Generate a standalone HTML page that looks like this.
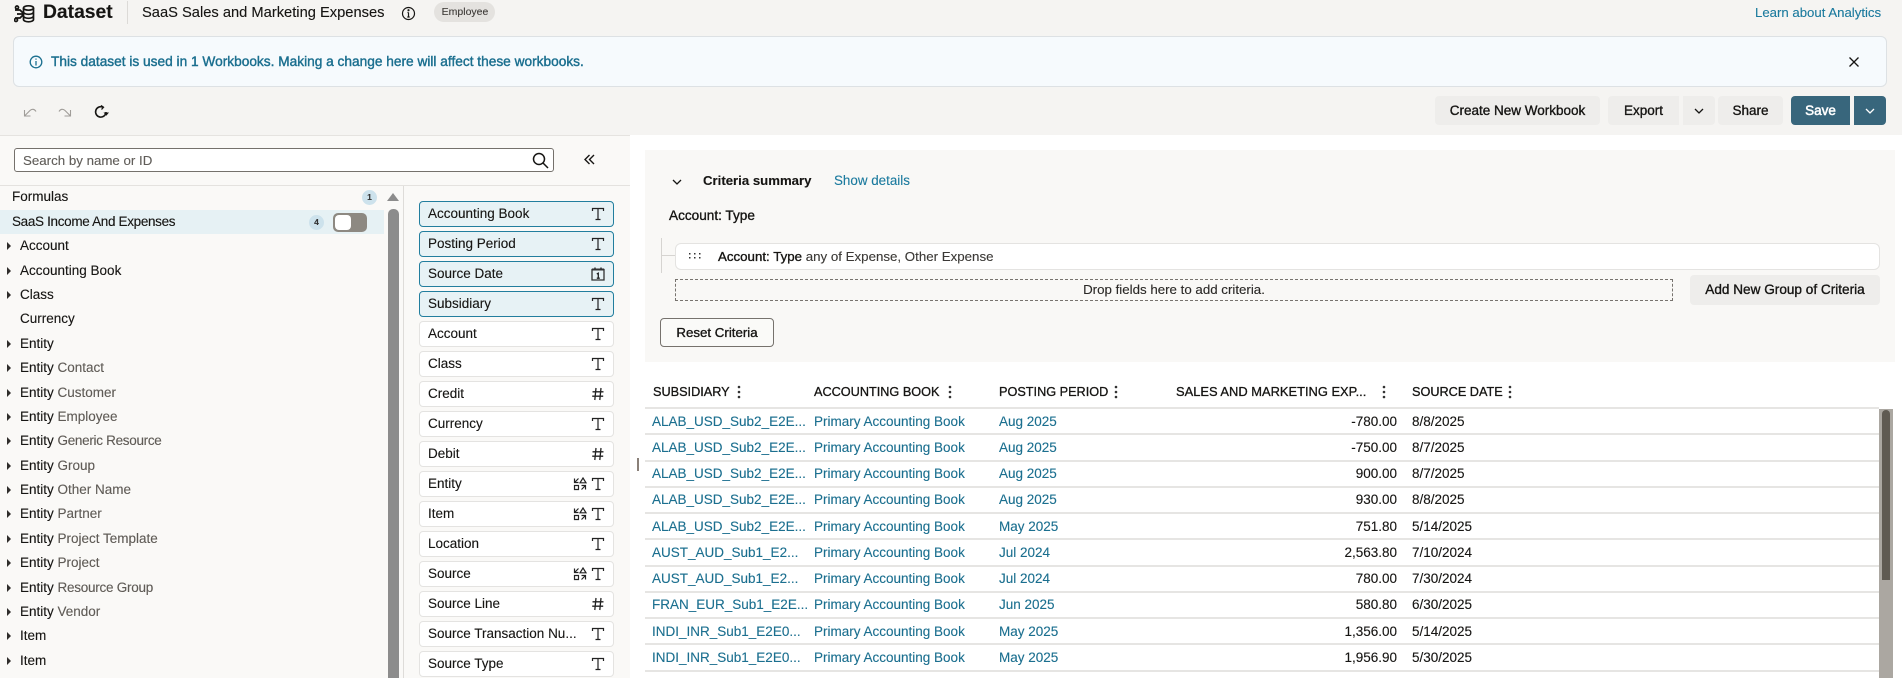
<!DOCTYPE html>
<html lang="en"><head><meta charset="utf-8"><title>Dataset</title>
<style>
html,body{margin:0;padding:0;width:1902px;height:678px;overflow:hidden;background:#fff;font-family:"Liberation Sans",sans-serif;color:#161513;font-size:13.5px;-webkit-text-stroke:.12px currentColor}
.a{position:absolute;white-space:nowrap;line-height:18px}
.box{position:absolute;box-sizing:border-box}
.btn{position:absolute;box-sizing:border-box;top:96px;height:29px;background:#eeedeb;border-radius:4px;text-align:center;line-height:29px;font-weight:400;-webkit-text-stroke:.35px #161513;font-size:13.5px}
.t{position:absolute;left:20px;white-space:nowrap;line-height:18px}
.t i{font-style:normal;color:#5f5b56}
.ar{position:absolute;left:7px;width:0;height:0;border-left:4px solid #2f2d2b;border-top:4px solid transparent;border-bottom:4px solid transparent}
.p{position:absolute;left:419px;width:195px;height:26px;box-sizing:border-box;background:#fff;border:1px solid #e4e3e1;border-radius:4px;line-height:24px;padding-left:8px;white-space:nowrap}
.p.s{background:#e7f2f5;border:1px solid #227e9e}
.p svg{position:absolute;top:4px}
.hl{position:absolute;left:645px;width:1234px;height:2px;background:#e6e5e3}
.h{position:absolute;top:383px;line-height:18px;white-space:nowrap;-webkit-text-stroke:.3px #161513;font-size:12.7px}
.c{position:absolute;line-height:18px;white-space:nowrap}
.l{color:#1b6f8f}
.n{text-align:right;width:120px;left:1277px}
.d{left:1412px}
svg{display:block}
</style></head><body>
<svg width="0" height="0" style="position:absolute"><defs>
<symbol id="T" viewBox="0 0 16 16"><path d="M2.5 5V2.5h11V5M8 2.5v11M5.5 13.5h5" fill="none" stroke="#222" stroke-width="1.2"/></symbol>
<symbol id="H" viewBox="0 0 16 16"><path d="M6 2 4.8 14M11 2 9.8 14M2.5 5.8h11M2.2 10.2h11" fill="none" stroke="#222" stroke-width="1.3"/></symbol>
<symbol id="C" viewBox="0 0 16 16"><path d="M2 3.500h12v10.500H2z" fill="none" stroke="#333" stroke-width="1.3"/><path d="M2 3.500h12" stroke="#333" stroke-width="2"/><path d="M5 1.500v2.500M11 1.500v2.500" stroke="#333" stroke-width="1.5"/><path d="M6.800 8 8.300 7.200v5M6.800 12.200h3" fill="none" stroke="#222" stroke-width="1.3"/></symbol>
<symbol id="G" viewBox="0 0 14 14"><path d="M1.5 1.500v4h4M1.5 5.500l4-4" fill="none" stroke="#222" stroke-width="1.2"/><path d="M10 1 13 5.800H7z" fill="none" stroke="#222" stroke-width="1.2"/><path d="M1.500 8.500h4v4h-4z" fill="none" stroke="#222" stroke-width="1.2"/><path d="M8.500 8.500h4v4M12.500 8.500l-4 4" fill="none" stroke="#222" stroke-width="1.2"/></symbol>
<symbol id="K" viewBox="0 0 6 16"><circle cx="3" cy="3" r="1.3" fill="#333"/><circle cx="3" cy="8" r="1.3" fill="#333"/><circle cx="3" cy="13" r="1.3" fill="#333"/></symbol>
</defs></svg>

<!-- top band -->
<div class="box" style="left:0;top:0;width:1902px;height:135px;background:#f5f4f2"></div>

<svg class="box" style="left:14px;top:4px" width="22" height="20" viewBox="0 0 22 20" fill="none" stroke="#161513" stroke-width="1.7"><ellipse cx="14.500" cy="4" rx="5" ry="2.200"/><path d="M9.500 4v11.500c0 1.300 2.200 2.300 5 2.300s5-1 5-2.300V4M9.500 8c0 1.300 2.200 2.300 5 2.300s5-1 5-2.300M9.500 12c0 1.300 2.200 2.300 5 2.300s5-1 5-2.300M1 6h5l3 3M1 14h5l3-3M3 10h6"/><circle cx="3" cy="3.500" r="1.500"/><circle cx="2" cy="16" r="1.500"/></svg>
<div class="a" style="left:43px;top:1px;font-size:19.300px;font-weight:700;line-height:24px">Dataset</div>
<div class="box" style="left:127px;top:1px;width:1px;height:23px;background:#dcdad7"></div>
<div class="a" style="left:142px;top:3px;font-size:14.700px;line-height:20px">SaaS Sales and Marketing Expenses</div>
<svg class="box" style="left:401px;top:6px" width="15" height="15" viewBox="0 0 15 15" fill="none" stroke="#161513" stroke-width="1.2"><circle cx="7.500" cy="7.500" r="6"/><path d="M7.500 6.500v4.500M6.300 11h2.400M6.500 6.500h1"/><circle cx="7.500" cy="4.200" r=".5"/></svg>
<div class="box" style="left:434px;top:2px;width:61px;height:20px;background:#e4e2df;border-radius:10px;text-align:center;line-height:20px;font-size:10.500px;color:#3f3c39;padding-left:1px">Employee</div>
<div class="a" style="left:1755px;top:3px;font-size:13.200px;color:#1b7a9e;line-height:20px">Learn about Analytics</div>

<!-- banner -->
<div class="box" style="left:13px;top:36px;width:1874px;height:51px;background:#f6fafd;border:1px solid #dde1e4;border-radius:6px"></div>
<svg class="box" style="left:29px;top:55px" width="14" height="14" viewBox="0 0 14 14" fill="none" stroke="#1b6f8f" stroke-width="1.3"><circle cx="7" cy="7" r="5.800"/><path d="M7 6v4.500"/><path d="M7 3.500v1.200"/></svg>
<div class="a" style="left:51px;top:53px;font-size:13.700px;color:#1b6f8f;-webkit-text-stroke:.4px #1b6f8f">This dataset is used in 1 Workbooks. Making a change here will affect these workbooks.</div>
<svg class="box" style="left:1848px;top:56px" width="12" height="12" viewBox="0 0 12 12" stroke="#161513" stroke-width="1.3"><path d="M1.500 1.500l9 9M10.500 1.500l-9 9"/></svg>

<!-- undo/redo/refresh -->
<svg class="box" style="left:23px;top:106px" width="14" height="12" viewBox="0 0 14 12" fill="none" stroke="#a09d99" stroke-width="1.1"><path d="M1.500 4v6h6M1.500 10 7 4.500c2-2 4.500-1.500 6 1"/></svg>
<svg class="box" style="left:58px;top:106px" width="14" height="12" viewBox="0 0 14 12" fill="none" stroke="#a09d99" stroke-width="1.1"><path d="M12.500 4v6h-6M12.500 10 7 4.500c-2-2-4.500-1.500-6 1"/></svg>
<svg class="box" style="left:94px;top:105px" width="15" height="14" viewBox="0 0 15 14" fill="none" stroke="#161513" stroke-width="1.6"><path d="M12 7A5.200 5.200 0 1 1 9 2.200"/><path d="M9.500 7.500h5.500l-2.700 3.300z" fill="#161513" stroke="none"/><path d="M7 .5 9.500 2.200 7.500 4.500" stroke-width="1.300"/></svg>

<!-- action buttons -->
<div class="btn" style="left:1435px;width:165px">Create New Workbook</div>
<div class="btn" style="left:1608px;width:71px;border-radius:4px 0 0 4px">Export</div>
<div class="btn" style="left:1683px;width:32px;border-radius:0 4px 4px 0"><svg class="box" style="left:11px;top:12px" width="10" height="6" viewBox="0 0 10 6" fill="none" stroke="#161513" stroke-width="1.3"><path d="M1 1l4 4 4-4"/></svg></div>
<div class="btn" style="left:1718px;width:65px">Share</div>
<div class="btn" style="left:1791px;width:59px;background:#38667c;color:#fff;-webkit-text-stroke:.5px #fff;border-radius:4px 0 0 4px">Save</div>
<div class="btn" style="left:1854px;width:32px;background:#38667c;border-radius:0 4px 4px 0"><svg class="box" style="left:11px;top:12px" width="10" height="6" viewBox="0 0 10 6" fill="none" stroke="#fff" stroke-width="1.3"><path d="M1 1l4 4 4-4"/></svg></div>

<!-- left panel -->
<div class="box" style="left:0;top:135px;width:630px;height:543px;background:#faf9f7;border-top:1px solid #e5e3e0"></div>
<div class="box" style="left:14px;top:148px;width:540px;height:24px;background:#fff;border:1px solid #75716c;border-radius:3px"></div>
<div class="a" style="left:23px;top:152px;color:#605d59;font-size:13.300px">Search by name or ID</div>
<svg class="box" style="left:532px;top:152px" width="17" height="17" viewBox="0 0 17 17" fill="none" stroke="#161513" stroke-width="1.5"><circle cx="7" cy="7" r="5.500"/><path d="M11 11l5 5"/></svg>
<svg class="box" style="left:584px;top:154px" width="11" height="11" viewBox="0 0 11 11" fill="none" stroke="#161513" stroke-width="1.4"><path d="M5.500 1 1 5.500 5.500 10M10 1 5.500 5.500 10 10"/></svg>
<div class="box" style="left:0;top:185px;width:630px;height:1px;background:#e4e2df"></div>
<div class="box" style="left:403px;top:186px;width:1px;height:492px;background:#dedcd9"></div>

<div class="a" style="left:12px;top:188px;">Formulas</div>
<div class="box" style="left:362px;top:190px;width:15px;height:15px;border-radius:50%;background:#cde2ec;text-align:center;line-height:15px;font-size:8.500px;font-weight:700;color:#333">1</div>
<div class="box" style="left:0;top:210px;width:384px;height:24px;background:#e6f1f4"></div>
<div class="a" style="left:12px;top:213px;letter-spacing:-.33px">SaaS Income And Expenses</div>
<div class="box" style="left:309px;top:215px;width:15px;height:15px;border-radius:50%;background:#cde2ec;text-align:center;line-height:15px;font-size:8.500px;font-weight:700;color:#333">4</div>
<div class="box" style="left:333px;top:213px;width:34px;height:19px;border-radius:5px;background:#8d8982"></div>
<div class="box" style="left:335px;top:215px;width:16px;height:15px;border-radius:4px;background:#fff"></div>

<div class="box" style="left:387px;top:193px;width:0;height:0;border-left:6.500px solid transparent;border-right:6.500px solid transparent;border-bottom:8px solid #8c8c8c"></div>
<div class="box" style="left:388px;top:209px;width:11px;height:469px;background:#8c8c8c;border-radius:5px 5px 0 0"></div>

<div class="ar" style="top:242px"></div><div class="t" style="top:237px">Account</div>
<div class="ar" style="top:267px"></div><div class="t" style="top:262px">Accounting Book</div>
<div class="ar" style="top:291px"></div><div class="t" style="top:286px">Class</div>
<div class="t" style="top:310px">Currency</div>
<div class="ar" style="top:340px"></div><div class="t" style="top:335px">Entity</div>
<div class="ar" style="top:364px"></div><div class="t" style="top:359px">Entity <i>Contact</i></div>
<div class="ar" style="top:389px"></div><div class="t" style="top:384px">Entity <i>Customer</i></div>
<div class="ar" style="top:413px"></div><div class="t" style="top:408px">Entity <i>Employee</i></div>
<div class="ar" style="top:437px"></div><div class="t" style="top:432px">Entity <i style="letter-spacing:-.3px">Generic Resource</i></div>
<div class="ar" style="top:462px"></div><div class="t" style="top:457px">Entity <i>Group</i></div>
<div class="ar" style="top:486px"></div><div class="t" style="top:481px">Entity <i>Other Name</i></div>
<div class="ar" style="top:510px"></div><div class="t" style="top:505px">Entity <i>Partner</i></div>
<div class="ar" style="top:535px"></div><div class="t" style="top:530px">Entity <i>Project Template</i></div>
<div class="ar" style="top:559px"></div><div class="t" style="top:554px">Entity <i>Project</i></div>
<div class="ar" style="top:584px"></div><div class="t" style="top:579px">Entity <i style="letter-spacing:-.25px">Resource Group</i></div>
<div class="ar" style="top:608px"></div><div class="t" style="top:603px">Entity <i>Vendor</i></div>
<div class="ar" style="top:632px"></div><div class="t" style="top:627px">Item</div>
<div class="ar" style="top:657px"></div><div class="t" style="top:652px">Item</div>

<!-- field pills -->
<div class="p s" style="top:201px">Accounting Book<svg style="left:170px" width="16" height="16"><use href="#T"/></svg></div>
<div class="p s" style="top:231px">Posting Period<svg style="left:170px" width="16" height="16"><use href="#T"/></svg></div>
<div class="p s" style="top:261px">Source Date<svg style="left:170px" width="16" height="16"><use href="#C"/></svg></div>
<div class="p s" style="top:291px">Subsidiary<svg style="left:170px" width="16" height="16"><use href="#T"/></svg></div>
<div class="p" style="top:321px">Account<svg style="left:170px" width="16" height="16"><use href="#T"/></svg></div>
<div class="p" style="top:351px">Class<svg style="left:170px" width="16" height="16"><use href="#T"/></svg></div>
<div class="p" style="top:381px">Credit<svg style="left:170px" width="16" height="16"><use href="#H"/></svg></div>
<div class="p" style="top:411px">Currency<svg style="left:170px" width="16" height="16"><use href="#T"/></svg></div>
<div class="p" style="top:441px">Debit<svg style="left:170px" width="16" height="16"><use href="#H"/></svg></div>
<div class="p" style="top:471px">Entity<svg style="left:153px;top:5px" width="14" height="14"><use href="#G"/></svg><svg style="left:170px" width="16" height="16"><use href="#T"/></svg></div>
<div class="p" style="top:501px">Item<svg style="left:153px;top:5px" width="14" height="14"><use href="#G"/></svg><svg style="left:170px" width="16" height="16"><use href="#T"/></svg></div>
<div class="p" style="top:531px">Location<svg style="left:170px" width="16" height="16"><use href="#T"/></svg></div>
<div class="p" style="top:561px">Source<svg style="left:153px;top:5px" width="14" height="14"><use href="#G"/></svg><svg style="left:170px" width="16" height="16"><use href="#T"/></svg></div>
<div class="p" style="top:591px">Source Line<svg style="left:170px" width="16" height="16"><use href="#H"/></svg></div>
<div class="p" style="top:621px">Source Transaction Nu...<svg style="left:170px" width="16" height="16"><use href="#T"/></svg></div>
<div class="p" style="top:651px">Source Type<svg style="left:170px" width="16" height="16"><use href="#T"/></svg></div>

<!-- criteria -->
<div class="box" style="left:645px;top:150px;width:1250px;height:212px;background:#f9f8f6"></div>
<svg class="box" style="left:672px;top:179px" width="10" height="6" viewBox="0 0 10 6" fill="none" stroke="#161513" stroke-width="1.3"><path d="M1 1l4 4 4-4"/></svg>
<div class="a" style="left:703px;top:172px;font-weight:700;font-size:13.200px">Criteria summary</div>
<div class="a" style="left:834px;top:172px;color:#1b7a9e;font-size:13.400px">Show details</div>
<div class="a" style="left:669px;top:207px;-webkit-text-stroke:.35px #161513;font-size:13.600px">Account: Type</div>
<div class="box" style="left:661px;top:238px;width:1px;height:35px;background:#d6d4d1"></div>
<div class="box" style="left:661px;top:255px;width:14px;height:1px;background:#d6d4d1"></div>
<div class="box" style="left:675px;top:243px;width:1205px;height:27px;background:#fff;border:1px solid #e4e3e1;border-radius:6px"></div>
<svg class="box" style="left:688px;top:253px" width="14" height="6" viewBox="0 0 14 6" fill="#333"><rect x="1" y="0" width="1.500" height="1.500"/><rect x="6" y="0" width="1.500" height="1.500"/><rect x="11" y="0" width="1.500" height="1.500"/><rect x="1" y="4" width="1.500" height="1.500"/><rect x="6" y="4" width="1.500" height="1.500"/><rect x="11" y="4" width="1.500" height="1.500"/></svg>
<div class="a" style="left:718px;top:248px;font-size:13.300px"><span style="-webkit-text-stroke:.35px #161513">Account: Type</span> <span style="color:#3b3936">any of Expense, Other Expense</span></div>
<div class="box" style="left:675px;top:279px;width:998px;height:22px;border:1px dashed #77736e;text-align:center;line-height:20px;font-size:13.300px;color:#2a2826">Drop fields here to add criteria.</div>
<div class="box" style="left:1690px;top:275px;width:190px;height:30px;background:#eeedeb;border-radius:4px;text-align:center;line-height:30px;-webkit-text-stroke:.35px #161513;font-size:13.600px">Add New Group of Criteria</div>
<div class="box" style="left:660px;top:318px;width:114px;height:29px;background:#fafaf8;border:1px solid #76726d;border-radius:4px;text-align:center;line-height:27px;-webkit-text-stroke:.35px #161513;font-size:13.300px">Reset Criteria</div>

<!-- table headers -->
<div class="h" style="left:653px">SUBSIDIARY</div><svg class="box" style="left:736px;top:384px" width="6" height="16"><use href="#K"/></svg>
<div class="h" style="left:814px">ACCOUNTING BOOK</div><svg class="box" style="left:947px;top:384px" width="6" height="16"><use href="#K"/></svg>
<div class="h" style="left:999px">POSTING PERIOD</div><svg class="box" style="left:1113px;top:384px" width="6" height="16"><use href="#K"/></svg>
<div class="h" style="left:1176px;font-size:12.9px">SALES AND MARKETING EXP...</div><svg class="box" style="left:1381px;top:384px" width="6" height="16"><use href="#K"/></svg>
<div class="h" style="left:1412px">SOURCE DATE</div><svg class="box" style="left:1507px;top:384px" width="6" height="16"><use href="#K"/></svg>

<div class="box" style="left:637px;top:458px;width:2px;height:13px;background:#8a8079"></div>

<div class="hl" style="top:407px"></div><div class="hl" style="top:433px"></div><div class="hl" style="top:460px"></div><div class="hl" style="top:486px"></div><div class="hl" style="top:512px"></div><div class="hl" style="top:538px"></div><div class="hl" style="top:565px"></div><div class="hl" style="top:591px"></div><div class="hl" style="top:617px"></div><div class="hl" style="top:643px"></div><div class="hl" style="top:670px"></div>

<!-- rows -->
<div class="c l" style="left:652px;top:413px">ALAB_USD_Sub2_E2E...</div><div class="c l" style="left:814px;top:413px">Primary Accounting Book</div><div class="c l" style="left:999px;top:413px">Aug 2025</div><div class="c n" style="top:413px">-780.00</div><div class="c d" style="top:413px">8/8/2025</div>
<div class="c l" style="left:652px;top:439px">ALAB_USD_Sub2_E2E...</div><div class="c l" style="left:814px;top:439px">Primary Accounting Book</div><div class="c l" style="left:999px;top:439px">Aug 2025</div><div class="c n" style="top:439px">-750.00</div><div class="c d" style="top:439px">8/7/2025</div>
<div class="c l" style="left:652px;top:465px">ALAB_USD_Sub2_E2E...</div><div class="c l" style="left:814px;top:465px">Primary Accounting Book</div><div class="c l" style="left:999px;top:465px">Aug 2025</div><div class="c n" style="top:465px">900.00</div><div class="c d" style="top:465px">8/7/2025</div>
<div class="c l" style="left:652px;top:491px">ALAB_USD_Sub2_E2E...</div><div class="c l" style="left:814px;top:491px">Primary Accounting Book</div><div class="c l" style="left:999px;top:491px">Aug 2025</div><div class="c n" style="top:491px">930.00</div><div class="c d" style="top:491px">8/8/2025</div>
<div class="c l" style="left:652px;top:518px">ALAB_USD_Sub2_E2E...</div><div class="c l" style="left:814px;top:518px">Primary Accounting Book</div><div class="c l" style="left:999px;top:518px">May 2025</div><div class="c n" style="top:518px">751.80</div><div class="c d" style="top:518px">5/14/2025</div>
<div class="c l" style="left:652px;top:544px">AUST_AUD_Sub1_E2...</div><div class="c l" style="left:814px;top:544px">Primary Accounting Book</div><div class="c l" style="left:999px;top:544px">Jul 2024</div><div class="c n" style="top:544px">2,563.80</div><div class="c d" style="top:544px">7/10/2024</div>
<div class="c l" style="left:652px;top:570px">AUST_AUD_Sub1_E2...</div><div class="c l" style="left:814px;top:570px">Primary Accounting Book</div><div class="c l" style="left:999px;top:570px">Jul 2024</div><div class="c n" style="top:570px">780.00</div><div class="c d" style="top:570px">7/30/2024</div>
<div class="c l" style="left:652px;top:596px">FRAN_EUR_Sub1_E2E...</div><div class="c l" style="left:814px;top:596px">Primary Accounting Book</div><div class="c l" style="left:999px;top:596px">Jun 2025</div><div class="c n" style="top:596px">580.80</div><div class="c d" style="top:596px">6/30/2025</div>
<div class="c l" style="left:652px;top:623px">INDI_INR_Sub1_E2E0...</div><div class="c l" style="left:814px;top:623px">Primary Accounting Book</div><div class="c l" style="left:999px;top:623px">May 2025</div><div class="c n" style="top:623px">1,356.00</div><div class="c d" style="top:623px">5/14/2025</div>
<div class="c l" style="left:652px;top:649px">INDI_INR_Sub1_E2E0...</div><div class="c l" style="left:814px;top:649px">Primary Accounting Book</div><div class="c l" style="left:999px;top:649px">May 2025</div><div class="c n" style="top:649px">1,956.90</div><div class="c d" style="top:649px">5/30/2025</div>

<!-- table scrollbar -->
<div class="box" style="left:1879px;top:409px;width:14px;height:269px;background:#aba7a1"></div>
<div class="box" style="left:1882px;top:410px;width:8px;height:170px;background:#5f5a52;border-radius:4px 4px 0 0"></div>
</body></html>
